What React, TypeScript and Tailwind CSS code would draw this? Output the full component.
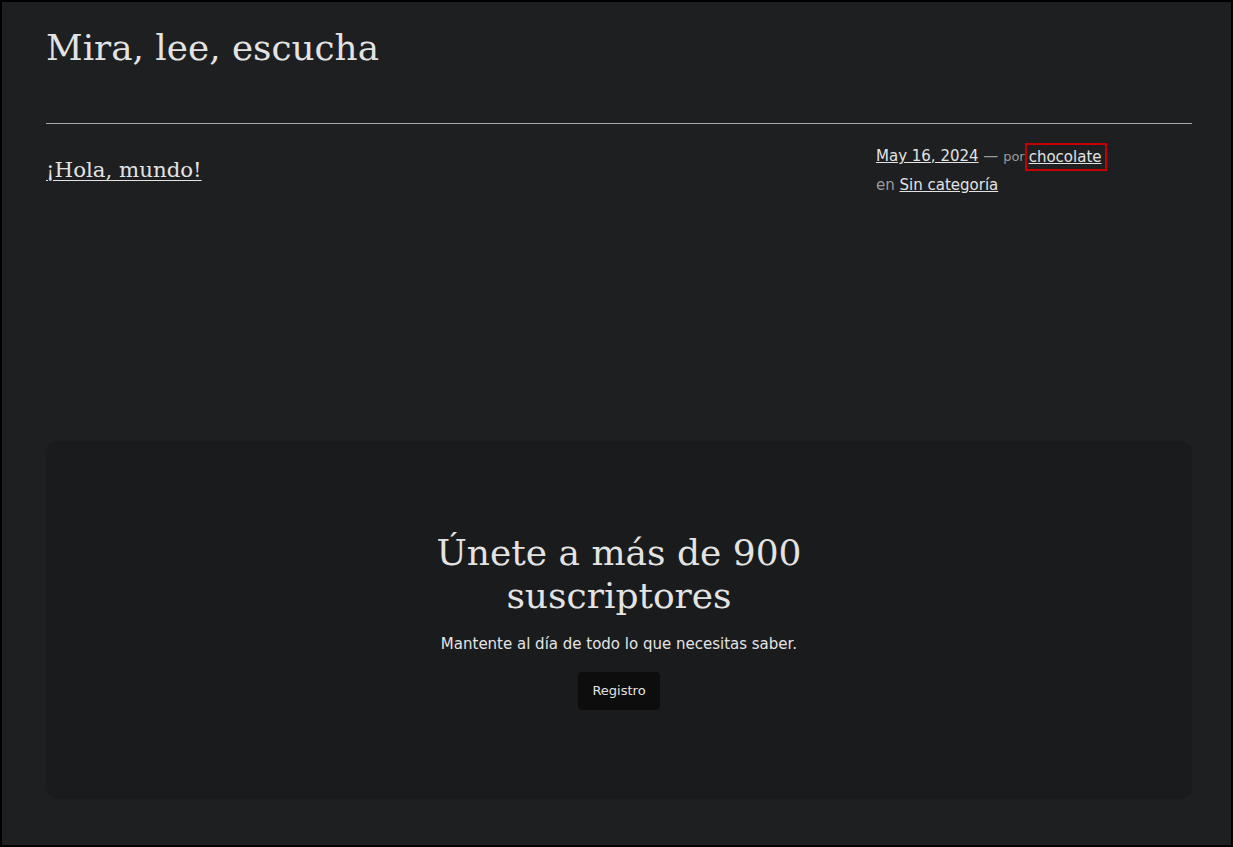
const serif = "font-['DejaVu_Serif','Liberation_Serif',serif]"
const sans = "font-['DejaVu_Sans','Liberation_Sans',sans-serif]"

const Header = () => (
  <header className="pt-[22px] pb-[51px] border-b border-[#a9a9a9]">
    <h1 className={`${serif} text-[35.8px] leading-[48px] text-[#e3e3e3]`}>Mira, lee, escucha</h1>
  </header>
)

const PostRow = () => (
  <article className="flex justify-between items-start pt-[18px]">
    <h2 className={`${serif} mt-[8px] text-[21.3px] leading-[40px] text-[#e3e3e3]`}>
      <a href="#" className="underline underline-offset-[3px] decoration-1">
        ¡Hola, mundo!
      </a>
    </h2>
    <div className={`${sans} w-[316px] text-[15px] leading-[28px] text-[#e3e3e3]`}>
      <div>
        <a href="#" className="underline">May 16, 2024</a>
        <span className="text-[#9b9b9b]"> — </span>
        <span className="text-[13px] text-[#9b9b9b]">por</span>
        <a
          href="#"
          className="inline-block h-[24px] leading-[24px] align-middle ml-[2px] pl-[2px] pr-[3px] underline outline-2 outline-[#c40000]"
        >
          chocolate
        </a>
      </div>
      <div>
        <span className="text-[#9b9b9b]">en </span>
        <a href="#" className="underline">Sin categoría</a>
      </div>
    </div>
  </article>
)

const Newsletter = () => (
  <section className="mt-[242px] h-[358px] rounded-[12px] bg-[#1a1b1d] flex flex-col items-center justify-center">
    <h2 className={`${serif} max-w-[420px] text-center text-[36px] leading-[43px] text-[#e3e3e3]`}>
      Únete a más de 900 suscriptores
    </h2>
    <p className={`${sans} mt-[15px] text-[15px] leading-[24px] text-[#e3e3e3]`}>
      Mantente al día de todo lo que necesitas saber.
    </p>
    <button className={`${sans} mt-[16px] h-[38px] px-[14px] rounded-[4px] bg-[#0d0d0d] text-[13px] text-[#e3e3e3]`}>
      Registro
    </button>
  </section>
)

export default function App() {
  return (
    <div className="h-[847px] w-[1233px] border-2 border-black bg-[#1e1f21] overflow-hidden">
      <main className="pl-[44px] pr-[39px]">
        <Header />
        <PostRow />
        <Newsletter />
      </main>
    </div>
  )
}
